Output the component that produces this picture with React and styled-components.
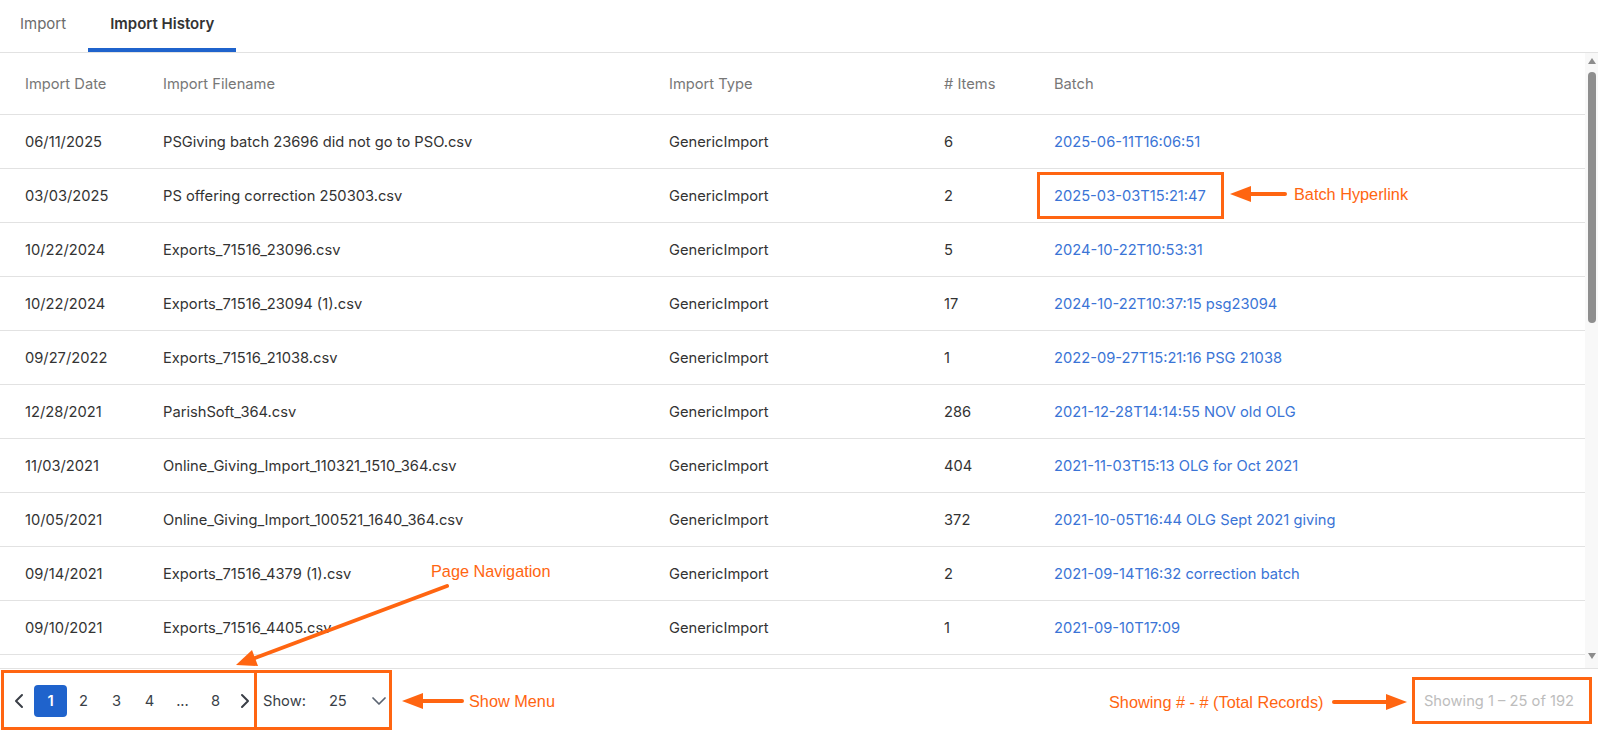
import React from 'react';
import styled, { createGlobalStyle } from 'styled-components';
import { ChevronLeft, ChevronRight, ChevronDown } from 'lucide-react';

const imports = [
  ['06/11/2025', 'PSGiving batch 23696 did not go to PSO.csv', 'GenericImport', '6', '2025-06-11T16:06:51'],
  ['03/03/2025', 'PS offering correction 250303.csv', 'GenericImport', '2', '2025-03-03T15:21:47'],
  ['10/22/2024', 'Exports_71516_23096.csv', 'GenericImport', '5', '2024-10-22T10:53:31'],
  ['10/22/2024', 'Exports_71516_23094 (1).csv', 'GenericImport', '17', '2024-10-22T10:37:15 psg23094'],
  ['09/27/2022', 'Exports_71516_21038.csv', 'GenericImport', '1', '2022-09-27T15:21:16 PSG 21038'],
  ['12/28/2021', 'ParishSoft_364.csv', 'GenericImport', '286', '2021-12-28T14:14:55 NOV old OLG'],
  ['11/03/2021', 'Online_Giving_Import_110321_1510_364.csv', 'GenericImport', '404', '2021-11-03T15:13 OLG for Oct 2021'],
  ['10/05/2021', 'Online_Giving_Import_100521_1640_364.csv', 'GenericImport', '372', '2021-10-05T16:44 OLG Sept 2021 giving'],
  ['09/14/2021', 'Exports_71516_4379 (1).csv', 'GenericImport', '2', '2021-09-14T16:32 correction batch'],
  ['09/10/2021', 'Exports_71516_4405.csv', 'GenericImport', '1', '2021-09-10T17:09'],
];

function App() {
  return (
    <Page>
      <GlobalStyle />

      <Tabs>
        <Tab>Import</Tab>
        <Tab active>Import History</Tab>
      </Tabs>

      <TableArea>
        <Table>
          <HeaderRow>
            <HeadCell>Import Date</HeadCell>
            <HeadCell>Import Filename</HeadCell>
            <HeadCell>Import Type</HeadCell>
            <HeadCell># Items</HeadCell>
            <HeadCell>Batch</HeadCell>
          </HeaderRow>
          {imports.map((row, i) => (
            <Row key={i}>
              <Cell>{row[0]}</Cell>
              <Cell>{row[1]}</Cell>
              <Cell>{row[2]}</Cell>
              <Cell>{row[3]}</Cell>
              <Cell><BatchLink href="#">{row[4]}</BatchLink></Cell>
            </Row>
          ))}
          <Row />
        </Table>
        <ScrollBar>
          <ScrollArrow />
          <ScrollThumb />
          <ScrollArrow down />
        </ScrollBar>
      </TableArea>

      <Footer>
        <Pager>
          <PageArrow><ChevronLeft size={24} strokeWidth={2} /></PageArrow>
          <PageButton active>1</PageButton>
          <PageButton>2</PageButton>
          <PageButton>3</PageButton>
          <PageButton>4</PageButton>
          <PageButton>...</PageButton>
          <PageButton>8</PageButton>
          <PageArrow><ChevronRight size={24} strokeWidth={2} /></PageArrow>
          <ShowLabel>Show:</ShowLabel>
          <ShowSelect>
            <span>25</span>
            <ChevronDown size={24} strokeWidth={1.75} />
          </ShowSelect>
        </Pager>
        <Showing>Showing 1 – 25 of 192</Showing>
      </Footer>

      {/* callouts drawn over the screenshot */}
      <NoteBox left={1037} top={172} width={187} height={47} />
      <NoteBox left={1} top={670} width={256} height={60} />
      <NoteBox left={254} top={670} width={138} height={60} />
      <NoteBox left={1412} top={677} width={180} height={47} />

      <NoteLabel left={1294} top={194}>Batch Hyperlink</NoteLabel>
      <NoteLabel left={431} top={571}>Page Navigation</NoteLabel>
      <NoteLabel left={469} top={701}>Show Menu</NoteLabel>
      <NoteLabel left={1109} top={702}>Showing # - # (Total Records)</NoteLabel>

      <ArrowLayer viewBox="0 0 1598 749">
        <g stroke="#ff6511" strokeWidth="4" strokeLinecap="round">
          <line x1="1248" y1="194" x2="1285" y2="194" />
          <line x1="420" y1="701" x2="462" y2="701" />
          <line x1="1334" y1="702" x2="1390" y2="702" />
          <line x1="447" y1="586" x2="255" y2="658" />
        </g>
        <g fill="#ff6511">
          <polygon points="1230,194 1251,186 1251,202" />
          <polygon points="402,701 423,693 423,709" />
          <polygon points="1407,702 1386,694 1386,710" />
          <polygon points="236,665 258,666 252,650" />
        </g>
      </ArrowLayer>
    </Page>
  );
}
export default App;

const GlobalStyle = createGlobalStyle`
  html, body {
    margin: 0;
    padding: 0;
    background: #ffffff;
  }
  body {
    font-family: Inter, "Noto Sans", sans-serif;
    color: #333333;
  }
  * {
    box-sizing: border-box;
  }
`;

const Page = styled.div`
  position: relative;
  height: 749px;
  display: flex;
  flex-direction: column;
  overflow: hidden;
`;

const Tabs = styled.div`
  display: flex;
  height: 53px;
  border-bottom: 1px solid #e2e2e2;
  flex-shrink: 0;
`;

const Tab = styled.div`
  display: flex;
  align-items: center;
  padding: 0 22px 2px;
  height: 52px;
  font-size: 15px;
  font-weight: ${p => (p.active ? 600 : 400)};
  color: ${p => (p.active ? '#333333' : '#6b6b6b')};
  border-bottom: 4px solid ${p => (p.active ? '#1f63cc' : 'transparent')};
  margin-left: ${p => (p.active ? '0' : '-2px')};
`;

const TableArea = styled.div`
  display: flex;
  height: 616px;
  flex-shrink: 0;
  border-bottom: 1px solid #e2e2e2;
`;

const Table = styled.div`
  flex: 1;
  overflow: hidden;
`;

const ScrollBar = styled.div`
  display: flex;
  flex-direction: column;
  align-items: center;
  width: 13px;
  padding: 5px 0 9px;
  background: #f8f8f8;
`;

const ScrollArrow = styled.div`
  width: 0;
  height: 0;
  border-left: 4.5px solid transparent;
  border-right: 4.5px solid transparent;
  border-bottom: ${p => (p.down ? '0' : '6px solid #8c8c8c')};
  border-top: ${p => (p.down ? '6px solid #8c8c8c' : '0')};
  margin-top: ${p => (p.down ? 'auto' : '0')};
`;

const ScrollThumb = styled.div`
  width: 8px;
  height: 251px;
  margin-top: 8px;
  border-radius: 4px;
  background: #8e8e8e;
`;

const Row = styled.div`
  display: grid;
  grid-template-columns: 138px 506px 275px 110px 1fr;
  align-items: center;
  height: 54px;
  border-bottom: 1px solid #e2e2e2;
`;

const HeaderRow = styled(Row)`
  height: 62px;
`;

const Cell = styled.div`
  padding-left: 25px;
  font-size: 14.7px;
  color: #333333;
  white-space: nowrap;
`;

const HeadCell = styled(Cell)`
  color: #777777;
`;

const BatchLink = styled.a`
  color: #3a74d6;
  text-decoration: none;
`;

const Footer = styled.div`
  display: flex;
  align-items: center;
  justify-content: space-between;
  padding: 16px 24px 0 6px;
`;

const Pager = styled.div`
  display: flex;
  align-items: center;
  height: 32px;
`;

const PageArrow = styled.button`
  display: flex;
  align-items: center;
  justify-content: center;
  width: 26px;
  height: 32px;
  padding: 0;
  border: none;
  background: none;
  color: #3a3f47;
  cursor: pointer;

  &:first-child {
    margin-right: 2px;
  }
`;

const PageButton = styled.button`
  width: 33px;
  height: 32px;
  padding: 0;
  border: none;
  border-radius: 4px;
  font-family: inherit;
  font-size: 14.7px;
  font-weight: ${p => (p.active ? 600 : 400)};
  color: ${p => (p.active ? '#ffffff' : '#3a3f47')};
  background: ${p => (p.active ? '#1f63cc' : 'transparent')};
  cursor: pointer;
`;

const ShowLabel = styled.span`
  margin-left: 5px;
  font-size: 14.7px;
  color: #3a3f47;
`;

const ShowSelect = styled.div`
  display: flex;
  align-items: center;
  justify-content: space-between;
  width: 82px;
  margin-left: 8px;
  padding: 0 5px 0 15px;
  font-size: 14.7px;
  color: #3a3f47;

  svg {
    color: #5b6472;
  }
`;

const Showing = styled.div`
  font-size: 14.7px;
  color: #bdbdbd;
`;

const NoteBox = styled.div`
  position: absolute;
  left: ${p => p.left}px;
  top: ${p => p.top}px;
  width: ${p => p.width}px;
  height: ${p => p.height}px;
  border: 3px solid #ff6511;
  pointer-events: none;
`;

const NoteLabel = styled.div`
  position: absolute;
  left: ${p => p.left}px;
  top: ${p => p.top}px;
  transform: translateY(-50%);
  font-family: "Liberation Sans", Arial, sans-serif;
  font-size: 16.3px;
  color: #ff6511;
  white-space: nowrap;
`;

const ArrowLayer = styled.svg`
  position: absolute;
  top: 0;
  left: 0;
  width: 1598px;
  height: 749px;
  pointer-events: none;
`;
